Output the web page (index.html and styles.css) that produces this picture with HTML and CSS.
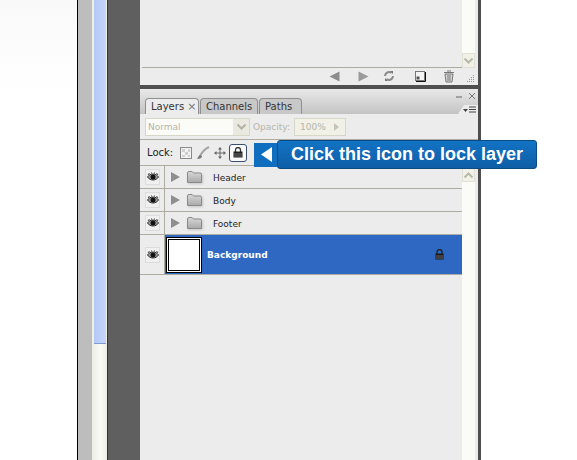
FILE: index.html
```html
<!DOCTYPE html>
<html lang="en">
<head>
    <meta charset="UTF-8">
    <meta name="viewport" content="width=device-width, initial-scale=1.0">
    <title>Lock layer</title>
    <link rel="stylesheet" href="styles.css">
</head>
<body>
    <svg class="defs" width="0" height="0">
        <defs>
            <symbol id="eye" viewBox="0 0 12 10">
                <path d="M0.500 5C3 1 9 1 11.500 5C9 9 3 9 0.500 5Z" fill="#9a9a9a" stroke="#333"/>
                <circle cx="6" cy="5" r="2.500" fill="#111"/>
                <path d="M1 3L2.500 1M4.500 1.500V0.500M7.500 1.500V0.500M11 3L9.500 1" stroke="#444"/>
            </symbol>
            <symbol id="folder" viewBox="0 0 15 12">
                <linearGradient id="folderFill" x1="0" y1="0" x2="0" y2="1">
                    <stop offset="0" stop-color="#d8d8d8"/>
                    <stop offset="1" stop-color="#a9a9a9"/>
                </linearGradient>
                <path d="M0.500 2Q0.500 0.500 2 0.500H5L6.500 2H13Q14.500 2 14.500 3.500V11.500H0.500Z" fill="url(#folderFill)" stroke="#8a8a8a"/>
            </symbol>
        </defs>
    </svg>

    <div class="page-left"></div>
    <div class="side-gray"></div>
    <div class="side-track"><div class="side-thumb"></div></div>
    <div class="workspace"></div>

    <div class="panels">
        <div class="top-panel">
            <div class="top-body">
                <div class="top-main"></div>
                <div class="scroll top-scroll">
                    <div class="scroll-btn">
                        <svg width="9" height="6" viewBox="0 0 9 6"><path d="M0.500 0.500L4.500 4.500L8.500 0.500" fill="none" stroke="#b9b9ac" stroke-width="2"/></svg>
                    </div>
                </div>
            </div>
            <div class="top-tools">
                <svg width="11" height="11" viewBox="0 0 11 11"><path d="M10.500 0.500V10.500L0.500 5.500Z" fill="#8c8c8c"/></svg>
                <svg class="tool-next" width="11" height="11" viewBox="0 0 11 11"><path d="M0.500 0.500V10.500L10.500 5.500Z" fill="#9a9a9a"/></svg>
                <svg class="tool-sync" width="12" height="12" viewBox="0 0 12 12"><path d="M2 6a4 4 0 0 1 6.500-3M10 6a4 4 0 0 1-6.500 3" fill="none" stroke="#8a8a8a" stroke-width="2"/><path d="M7 1h3v3zM5 11H2V8z" fill="#777"/></svg>
                <svg class="tool-new" width="11" height="11" viewBox="0 0 11 11"><rect x="0.500" y="0.500" width="9" height="9" fill="#f4f4f4" stroke="#777"/><path d="M10.500 1V10.500H1" fill="none" stroke="#111"/><rect x="1.500" y="5.500" width="3" height="3" fill="#555"/></svg>
                <svg class="tool-trash" width="12" height="13" viewBox="0 0 12 13"><path d="M1 2.500h10M2 4h8l-1 8H3z" fill="#d8d8d8" stroke="#777"/><path d="M4 1h4M5 5v6M7 5v6" stroke="#777" fill="none"/></svg>
                <svg class="grip" width="9" height="9" viewBox="0 0 9 9" fill="#999"><rect x="7" y="1" width="1" height="1"/><rect x="5" y="3" width="1" height="1"/><rect x="7" y="3" width="1" height="1"/><rect x="3" y="5" width="1" height="1"/><rect x="5" y="5" width="1" height="1"/><rect x="7" y="5" width="1" height="1"/><rect x="1" y="7" width="1" height="1"/><rect x="3" y="7" width="1" height="1"/><rect x="5" y="7" width="1" height="1"/><rect x="7" y="7" width="1" height="1"/></svg>
            </div>
        </div>

        <div class="layers-panel">
            <div class="tabbar">
                <div class="tab active">Layers <span class="tab-x">×</span></div>
                <div class="tab channels">Channels</div>
                <div class="tab paths">Paths</div>
                <div class="menu-notch"></div>
                <div class="win-btns">
                    <svg width="22" height="9" viewBox="0 0 22 9"><path d="M1 5h6" stroke="#666"/><path d="M14 1l6 6M20 1l-6 6" stroke="#777"/></svg>
                    <svg width="14" height="8" viewBox="0 0 14 8"><path d="M0 3h5L2.500 6z" fill="#444"/><path d="M6 1h7M6 3.500h7M6 6h7" stroke="#444"/></svg>
                </div>
            </div>

            <div class="blend-row">
                <div class="select">
                    <span class="select-text">Normal</span>
                    <span class="select-arrow">
                        <svg width="9" height="6" viewBox="0 0 9 6"><path d="M0.500 0.500L4.500 4.500L8.500 0.500" fill="none" stroke="#b3b3a6" stroke-width="2"/></svg>
                    </span>
                </div>
                <span class="opacity-label">Opacity:</span>
                <div class="opacity-box">100%<svg width="5" height="8" viewBox="0 0 5 8"><path d="M0 0V8L5 4Z" fill="#c4c4b8"/></svg></div>
            </div>

            <div class="lock-row">
                <span class="lock-label">Lock:</span>
                <svg class="lock-icon" width="12" height="12" viewBox="0 0 12 12"><rect x="0.500" y="0.500" width="11" height="11" fill="#f2f2f2" stroke="#8a8a8a"/><path d="M2 2h3v3H2zM8 2h2v3H8zM5 5h3v3H5zM2 8h3v2H2zM8 8h2v2H8z" fill="#cfcfcf"/></svg>
                <svg class="lock-icon lock-brush" width="13" height="14" viewBox="0 0 13 14"><path d="M12 1C8 3 5 6 3 10" fill="none" stroke="#a5a5a5" stroke-width="2"/><path d="M3 9C1 10 1 12 0 13C3 13 5 12 5 10Z" fill="#777"/></svg>
                <svg class="lock-icon" width="12" height="12" viewBox="0 0 12 12"><path d="M6 0L8 2.500H4ZM6 12L4 9.500H8ZM0 6L2.500 4V8ZM12 6L9.500 8V4Z" fill="#666"/><path d="M6 2v8M2 6h8" stroke="#666"/></svg>
                <div class="lock-active">
                    <svg width="10" height="11" viewBox="0 0 10 11"><path d="M2.500 5V3a2.500 2.500 0 0 1 5 0v2" fill="none" stroke="#333" stroke-width="1.300"/><rect x="0.500" y="4.500" width="9" height="6" fill="#222"/><path d="M1 7h8M1 9h8" stroke="#666"/></svg>
                </div>
            </div>

            <div class="layers-body">
                <div class="layers-list">
                    <div class="layer-row">
                        <div class="eye-cell"><div class="eye-box"><svg width="12" height="10"><use href="#eye"/></svg></div></div>
                        <svg class="arrow" width="9" height="10" viewBox="0 0 9 10"><path d="M0 0V10L9 5Z" fill="#8f8f8f"/></svg>
                        <svg class="folder" width="15" height="12"><use href="#folder"/></svg>
                        <span class="layer-name">Header</span>
                    </div>
                    <div class="layer-row">
                        <div class="eye-cell"><div class="eye-box"><svg width="12" height="10"><use href="#eye"/></svg></div></div>
                        <svg class="arrow" width="9" height="10" viewBox="0 0 9 10"><path d="M0 0V10L9 5Z" fill="#8f8f8f"/></svg>
                        <svg class="folder" width="15" height="12"><use href="#folder"/></svg>
                        <span class="layer-name">Body</span>
                    </div>
                    <div class="layer-row">
                        <div class="eye-cell"><div class="eye-box"><svg width="12" height="10"><use href="#eye"/></svg></div></div>
                        <svg class="arrow" width="9" height="10" viewBox="0 0 9 10"><path d="M0 0V10L9 5Z" fill="#8f8f8f"/></svg>
                        <svg class="folder" width="15" height="12"><use href="#folder"/></svg>
                        <span class="layer-name">Footer</span>
                    </div>
                    <div class="layer-row bg-row">
                        <div class="eye-cell"><div class="eye-box"><svg width="12" height="10"><use href="#eye"/></svg></div></div>
                        <div class="bg-selected">
                            <div class="thumb"></div>
                            <span class="bg-name">Background</span>
                            <svg class="bg-lock" width="9" height="11" viewBox="0 0 9 11"><path d="M2 5V3a2.500 2.500 0 0 1 5 0v2" fill="none" stroke="#222" stroke-width="1.300"/><rect x="0.500" y="4.500" width="8" height="6" fill="#1a1a1a"/><path d="M1 7h7M1 9h7" stroke="#666"/></svg>
                        </div>
                    </div>
                </div>
                <div class="scroll layers-scroll">
                    <div class="scroll-btn">
                        <svg width="9" height="6" viewBox="0 0 9 6"><path d="M0.500 5.500L4.500 1.500L8.500 5.500" fill="none" stroke="#b9b9ac" stroke-width="2"/></svg>
                    </div>
                </div>
            </div>

            <div class="callout">
                <div class="callout-arrow"><svg width="11" height="15" viewBox="0 0 11 15"><path d="M11 0V15L0 7.500Z" fill="#fff"/></svg></div>
                <div class="callout-text">Click this icon to lock layer</div>
            </div>
        </div>
    </div>

    <div class="page-right"></div>
</body>
</html>
```

FILE: styles.css
```css
* {
    margin: 0;
    padding: 0;
    box-sizing: border-box;
}

body {
    width: 577px;
    height: 460px;
    display: flex;
    overflow: hidden;
    background: #fff;
    font-family: "DejaVu Sans", Tahoma, sans-serif;
    font-size: 9px;
    color: #222;
}

svg {
    display: block;
    flex-shrink: 0;
}

.defs {
    position: absolute;
}

.page-left {
    width: 77px;
    background: linear-gradient(#f9f9f9, #fff 90px);
}

.side-gray {
    width: 15px;
    background: #bdbdbd;
    border-left: 1px solid #000;
}

.side-track {
    width: 16px;
    background: linear-gradient(90deg, #eeeee6, #fafaf6 60%, #eeeee6);
    border-right: 1px solid #333;
}

.side-thumb {
    height: 344px;
    margin: 0 1px 0 2px;
    background: linear-gradient(90deg, #b4c8f5, #c6d6fc);
    border-bottom: 1px solid #7f9ad4;
}

.workspace {
    width: 32px;
    background: #5f5f5f;
}

.panels {
    width: 341px;
    display: flex;
    flex-direction: column;
    background: #ececec;
    border-right: 3px solid #4e4e4e;
}

.page-right {
    flex: 1;
    background: #fff;
}

/* top panel */
.top-panel {
    height: 85px;
    display: flex;
    flex-direction: column;
}

.top-body {
    height: 68px;
    display: flex;
}

.top-main {
    flex: 1;
    margin-left: 2px;
    border-bottom: 1px solid #aeaca1;
}

.scroll {
    width: 13px;
    margin-right: 3px;
    background: #fbfbf8;
}

.top-scroll {
    display: flex;
    flex-direction: column;
    justify-content: flex-end;
}

.scroll-btn {
    height: 15px;
    display: flex;
    align-items: center;
    justify-content: center;
    background: #f1f1e7;
    border: 1px solid #e0e0d4;
}

.top-tools {
    flex: 1;
    display: flex;
    align-items: center;
    padding-left: 189px;
    margin-top: -1px;
}

.tool-next {
    margin-left: 18px;
}

.tool-sync {
    margin-left: 14px;
}

.tool-new {
    margin-left: 20px;
}

.tool-trash {
    margin-left: 17px;
}

.grip {
    margin-left: 11px;
    margin-top: 4px;
}

/* layers panel */
.layers-panel {
    flex: 1;
    border-top: 4px solid #4f4f4f;
    position: relative;
    display: flex;
    flex-direction: column;
}

.tabbar {
    height: 25px;
    display: flex;
    align-items: flex-end;
    padding-left: 5px;
    gap: 1px;
    background: linear-gradient(#e9e9e9, #c3c3c3);
    position: relative;
}

.tab {
    height: 16px;
    padding: 0 5px;
    font-size: 10px;
    line-height: 16px;
    color: #333;
    background: #c8c8c8;
    border: 1px solid #8f8f8f;
    border-bottom: none;
    border-radius: 4px 4px 0 0;
    white-space: nowrap;
}

.tab.active {
    width: 54px;
    background: #ececec;
}

.tab.channels {
    width: 58px;
}

.tab.paths {
    width: 43px;
}

.tab-x {
    color: #777;
    font-size: 11px;
}

.menu-notch {
    position: absolute;
    right: 0;
    bottom: 0;
    width: 20px;
    height: 9px;
    background: #ececec;
    clip-path: polygon(100% 0, 30% 0, 0 100%, 100% 100%);
}

.win-btns {
    position: absolute;
    right: 1px;
    top: 3px;
    display: flex;
    flex-direction: column;
    align-items: flex-end;
    gap: 5px;
}

.blend-row {
    height: 26px;
    display: flex;
    align-items: center;
    padding-left: 5px;
    border-bottom: 1px solid #aeaca1;
    color: #b5b5ab;
}

.select {
    width: 105px;
    height: 18px;
    display: flex;
    border: 1px solid #d7d7c8;
    background: #fbfbf7;
}

.select-text {
    flex: 1;
    padding-left: 2px;
    line-height: 16px;
}

.select-arrow {
    width: 16px;
    display: flex;
    align-items: center;
    justify-content: center;
    background: #e9e9e0;
}

.opacity-label {
    width: 38px;
    margin-left: 3px;
    white-space: nowrap;
}

.opacity-box {
    width: 52px;
    height: 18px;
    margin-left: 3px;
    display: flex;
    align-items: center;
    justify-content: space-between;
    padding: 0 6px 0 5px;
    background: #f1f1e8;
    border: 1px solid #d7d7c8;
}

.lock-row {
    height: 26px;
    display: flex;
    align-items: center;
    padding-left: 7px;
    border-bottom: 1px solid #aeaca1;
}

.lock-label {
    width: 33px;
    font-size: 10px;
    color: #222;
}

.lock-icon {
    margin-right: 4px;
}

.lock-brush {
    margin-left: 1px;
}

.lock-active {
    width: 18px;
    height: 18px;
    margin-left: -1px;
    display: flex;
    align-items: center;
    justify-content: center;
    background: #fafafa;
    border: 1px solid #3a4f70;
    border-radius: 3px;
}

.layers-body {
    flex: 1;
    display: flex;
}

.layers-list {
    flex: 1;
}

.layers-scroll {
    padding-top: 1px;
}

.layer-row {
    height: 23px;
    display: flex;
    align-items: center;
    border-bottom: 1px solid #aeaca1;
}

.eye-cell {
    width: 25px;
    height: 100%;
    padding-left: 5px;
    display: flex;
    align-items: center;
    border-right: 1px solid #aeaca1;
}

.eye-box {
    width: 15px;
    height: 16px;
    display: flex;
    align-items: center;
    justify-content: center;
    border: 1px solid #dcdcdc;
    background: #f0f0f0;
}

.arrow {
    margin-left: 6px;
}

.folder {
    margin-left: 7px;
    filter: drop-shadow(1px 1px 1px #c4c4c4);
}

.layer-name {
    margin-left: 11px;
    padding-top: 2px;
    color: #222;
}

.bg-row {
    height: 40px;
}

.bg-selected {
    flex: 1;
    height: 100%;
    display: flex;
    align-items: center;
    background: #2e68c3;
}

.thumb {
    width: 36px;
    height: 36px;
    margin-left: 1px;
    background: #fff;
    border: 1px solid #000;
    box-shadow: inset 0 0 0 1px #fff, inset 0 0 0 2px #000;
}

.bg-name {
    margin-left: 5px;
    color: #fff;
    font-weight: bold;
}

.bg-lock {
    margin-left: auto;
    margin-right: 18px;
}

/* tooltip over the lock row */
.callout {
    position: absolute;
    left: 114px;
    top: 51px;
    display: flex;
    align-items: center;
}

.callout-arrow {
    width: 24px;
    height: 24px;
    display: flex;
    align-items: center;
    justify-content: center;
    background: #0f6fbe;
    margin-right: -1px;
}

.callout-text {
    width: 260px;
    height: 29px;
    text-align: center;
    line-height: 27px;
    font-family: "Liberation Sans", Arial, sans-serif;
    font-size: 18px;
    font-weight: bold;
    color: #fff;
    background: linear-gradient(#1273c4, #0f5ea6);
    border: 1px solid #0c4c85;
    border-radius: 3px;
}
```
